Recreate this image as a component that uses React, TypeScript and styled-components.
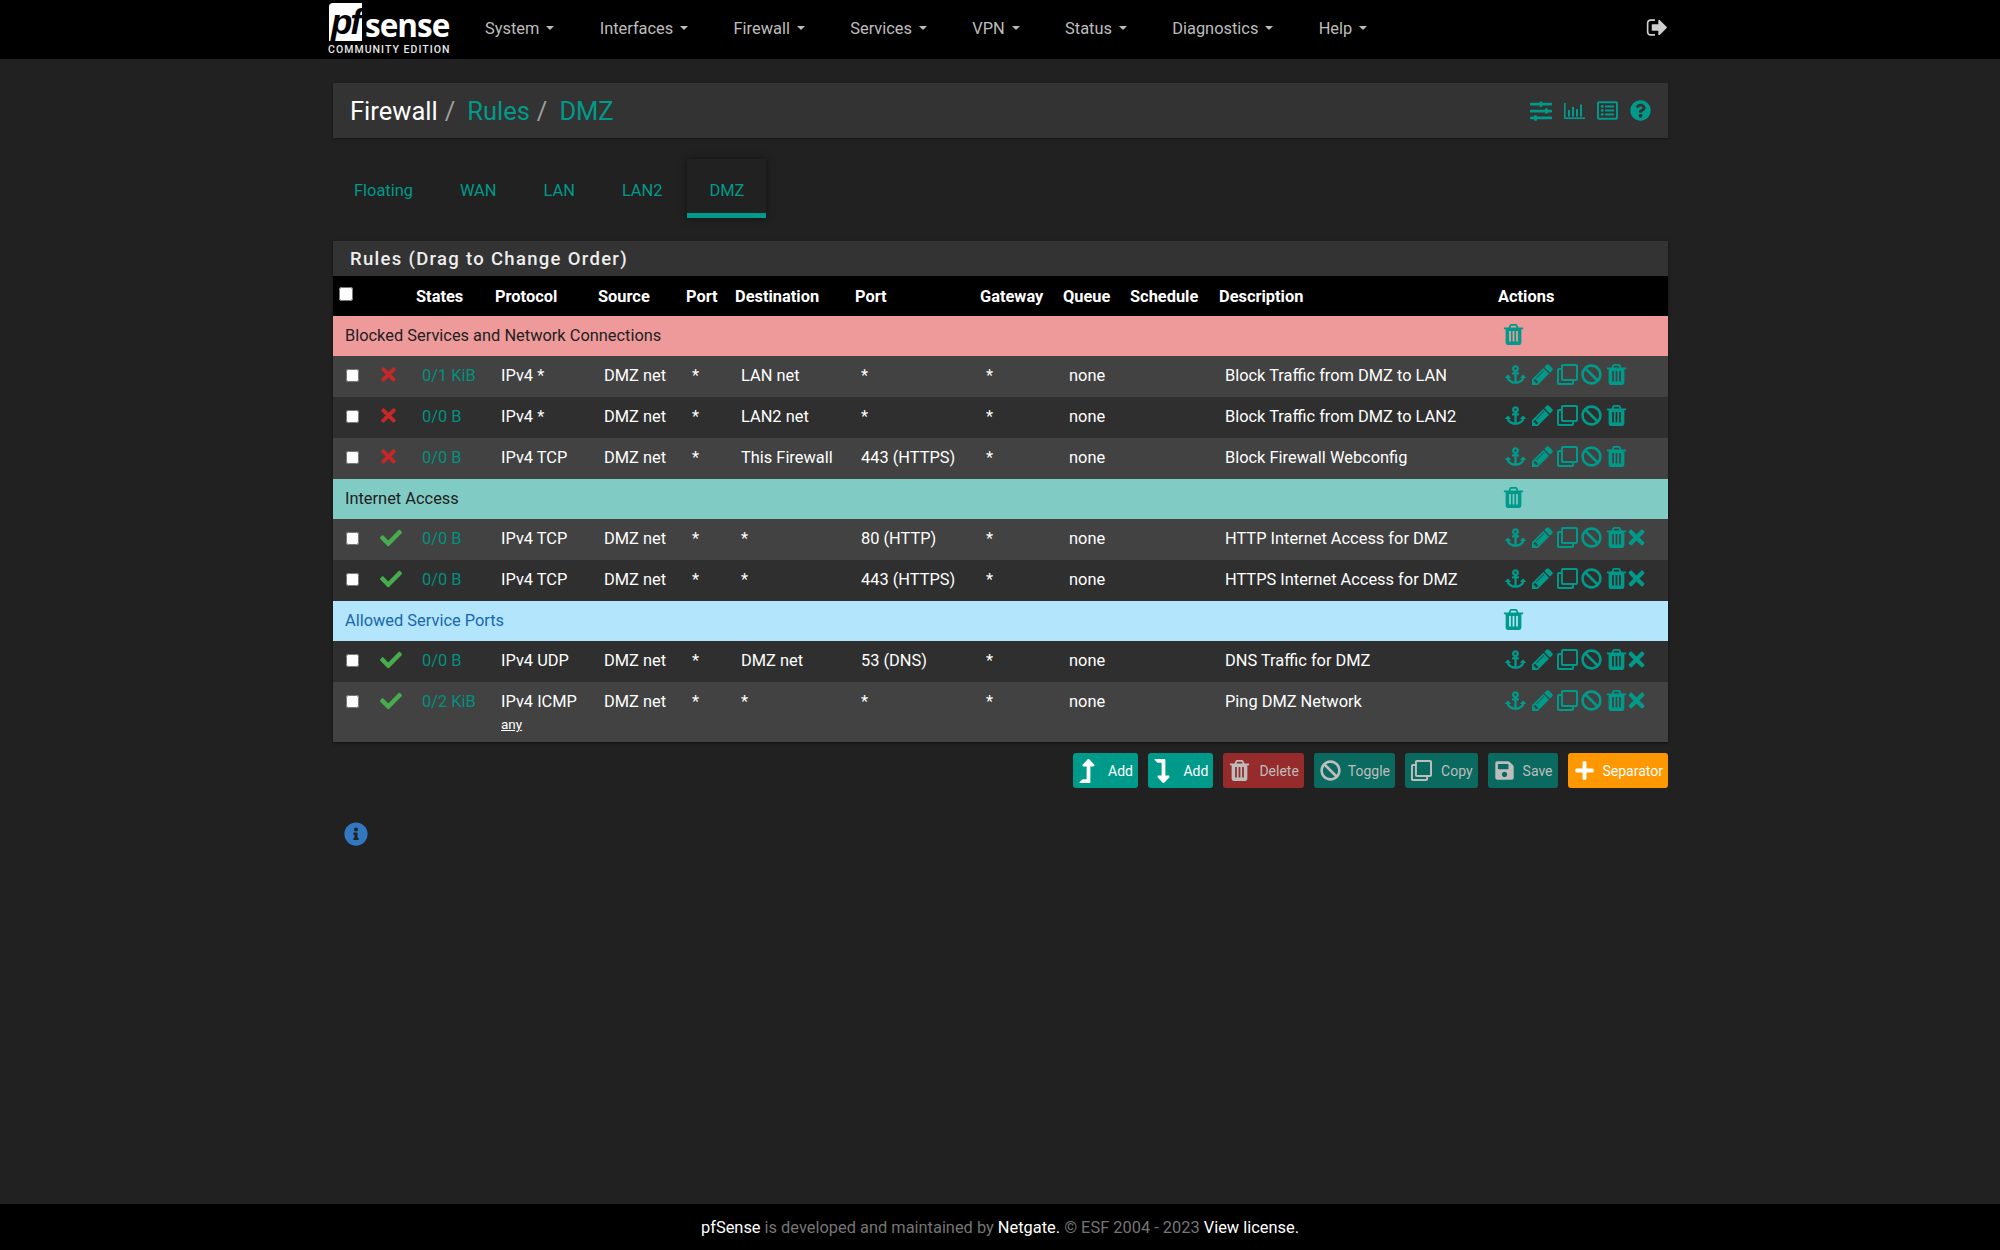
import React from "react";
import styled, { createGlobalStyle } from "styled-components";
import {
  FaAnchor,
  FaBan,
  FaCheck,
  FaInfoCircle,
  FaLevelDownAlt,
  FaLevelUpAlt,
  FaPlus,
  FaQuestionCircle,
  FaRegClone,
  FaRegListAlt,
  FaSave,
  FaSlidersH,
  FaTimes,
} from "react-icons/fa";

const TEAL = "#009a8a";

const GlobalStyle = createGlobalStyle`
  html, body {
    margin: 0;
    background: #212121;
    font-family: Roboto, "Liberation Sans", sans-serif;
    color: #fff;
  }
`;

const FaGlyph = ({ d, view = "0 0 1792 1792" }: { d: string; view?: string }) => (
  <svg viewBox={view} width="1em" height="1em" fill="currentColor">
    <path d={d} />
  </svg>
);

const TrashIcon = () => (
  <FaGlyph
    view="192 128 1408 1536"
    d="M704 1376v-704q0-14-9-23t-23-9h-64q-14 0-23 9t-9 23v704q0 14 9 23t23 9h64q14 0 23-9t9-23zm256 0v-704q0-14-9-23t-23-9h-64q-14 0-23 9t-9 23v704q0 14 9 23t23 9h64q14 0 23-9t9-23zm256 0v-704q0-14-9-23t-23-9h-64q-14 0-23 9t-9 23v704q0 14 9 23t23 9h64q14 0 23-9t9-23zm-544-992h448l-48-117q-7-9-17-11h-317q-10 2-17 11zm928 32v64q0 14-9 23t-23 9h-96v948q0 83-47 143.5t-113 60.5h-832q-66 0-113-58.5t-47-141.5v-952h-96q-14 0-23-9t-9-23v-64q0-14 9-23t23-9h309l70-167q15-37 54-63t79-26h320q40 0 79 26t54 63l70 167h309q14 0 23 9t9 23z"
  />
);

const PencilIcon = () => (
  <FaGlyph
    view="128 128 1536 1536"
    d="M491 1536l91-91-235-235-91 91v107h128v128h107zm523-928q0-22-22-22-10 0-17 7l-542 542q-7 7-7 17 0 22 22 22 10 0 17-7l542-542q7-7 7-17zm-54-192l416 416-832 832h-416v-416zm683 96q0 53-37 90l-166 166-416-416 166-165q36-38 90-38 53 0 91 38l235 234q37 39 37 91z"
  />
);

const SignOutIcon = () => (
  <FaGlyph d="M704 1440q0 4 1 20t.5 26.5-3 23.5-10 19.5-20.5 6.5h-320q-119 0-203.5-84.5t-84.5-203.5v-704q0-119 84.5-203.5t203.5-84.5h320q13 0 22.5 9.5t9.5 22.5q0 4 1 20t.5 26.5-3 23.5-10 19.5-20.5 6.5h-320q-66 0-113 47t-47 113v704q0 66 47 113t113 47h312l11.5 1 11.5 3 8 5.5 7 9 2 13.5zm928-544q0 26-19 45l-544 544q-19 19-45 19t-45-19-19-45v-288h-448q-26 0-45-19t-19-45v-384q0-26 19-45t45-19h448v-288q0-26 19-45t45-19 45 19l544 544q19 19 19 45z" />
);

const BarChartIcon = () => (
  <svg viewBox="0 0 21 16" width="21px" height="16px" fill="currentColor">
    <rect x="0" y="0" width="1.6" height="16" />
    <rect x="0" y="14.4" width="21" height="1.6" />
    <rect x="4" y="7" width="2" height="6.5" />
    <rect x="8" y="4" width="2" height="9.5" />
    <rect x="12" y="6" width="2" height="7.5" />
    <rect x="16" y="1.5" width="2" height="12" />
  </svg>
);

const Page = styled.div`
  min-height: 1250px;
  display: flex;
  flex-direction: column;
`;

const NavBar = styled.header`
  height: 59px;
  background: #000;
  flex: none;
`;

const NavInner = styled.div`
  width: 1335px;
  margin-left: 333px;
  height: 100%;
  display: flex;
  align-items: center;
`;

const Logo = styled.div`
  width: 157px;
  margin-left: -5px;
  flex: none;
  display: flex;
  flex-direction: column;
  align-items: flex-start;
`;

const LogoMark = styled.div`
  display: flex;
  align-items: center;
  margin-left: 1px;
  height: 38px;
`;

const LogoBox = styled.span`
  width: 33px;
  height: 38px;
  background: #fff;
  color: #000;
  border-radius: 4px 0 0 0;
  display: flex;
  align-items: center;
  justify-content: center;
  font: italic 700 35px/36px "Liberation Sans", sans-serif;
  letter-spacing: -2px;
  box-sizing: border-box;
`;

const LogoWord = styled.span`
  font: 700 31.5px/38px "Open Sans", sans-serif;
  letter-spacing: -1px;
  margin-left: 3px;
  padding-top: 5px;
  color: #fff;
`;

const LogoEdition = styled.span`
  font: 500 10.5px/12px Roboto, sans-serif;
  letter-spacing: 1.05px;
  color: #e6e6e6;
  margin-top: 3px;
  white-space: nowrap;
`;

const NavList = styled.nav`
  display: flex;
  gap: 45.3px;
  flex: 1;
  padding-bottom: 3px;
`;

const NavItem = styled.span`
  font-size: 16.4px;
  color: #bdbdbd;
  display: inline-flex;
  align-items: center;
  gap: 7px;
  white-space: nowrap;
`;

const Caret = styled.span`
  width: 0;
  height: 0;
  border-left: 4.5px solid transparent;
  border-right: 4.5px solid transparent;
  border-top: 4.5px solid #bdbdbd;
`;

const Logout = styled.span`
  font-size: 23px;
  color: #cfcfcf;
  display: flex;
  margin: 0 -1px 4px 0;
`;

const Main = styled.main`
  width: 1335px;
  margin-left: 333px;
  flex: 1;
`;

const BreadcrumbBar = styled.div`
  margin-top: 24px;
  height: 55px;
  background: #333;
  box-shadow: 0 1px 3px rgba(0, 0, 0, 0.35);
  display: flex;
  align-items: center;
  padding: 0 17px;
  box-sizing: border-box;
`;

const Crumbs = styled.h1`
  flex: 1;
  margin: 0;
  font-size: 25.5px;
  font-weight: 400;
  display: flex;
`;

const Crumb = styled.span<{ $link?: boolean }>`
  color: ${(p) => (p.$link ? TEAL : "#fff")};
`;

const CrumbSlash = styled.span`
  color: #9e9e9e;
  margin: 0 12px 0 7px;
`;

const BarIcons = styled.div`
  display: flex;
  align-items: center;
  gap: 12px;
  color: ${TEAL};
  font-size: 21px;
`;

const BarIcon = styled.span<{ $size?: number }>`
  display: flex;
  font-size: ${(p) => p.$size ?? 21}px;
`;

const Tabs = styled.div`
  display: flex;
  margin: 21px 0 0 -1px;
  gap: 3px;
`;

const Tab = styled.span<{ $active?: boolean }>`
  height: 59px;
  box-sizing: border-box;
  padding: 8px 22px 0;
  display: flex;
  align-items: center;
  font-size: 16.4px;
  color: ${TEAL};
  border-bottom: 5px solid ${(p) => (p.$active ? TEAL : "transparent")};
  box-shadow: ${(p) => (p.$active ? "0 0 8px rgba(0,0,0,0.45)" : "none")};
`;

const Panel = styled.section`
  margin-top: 23px;
  background: #333;
  box-shadow: 0 1px 3px rgba(0, 0, 0, 0.5);
`;

const PanelTitle = styled.h2`
  margin: 0;
  height: 35px;
  line-height: 36px;
  padding-left: 17px;
  font-size: 18.5px;
  font-weight: 500;
  letter-spacing: 1.3px;
  color: #eee;
`;

const RulesTable = styled.table`
  width: 100%;
  table-layout: fixed;
  border-collapse: collapse;
  font-size: 16.4px;
`;

const HeadRow = styled.tr`
  background: #000;
  height: 40px;
`;

const Th = styled.th`
  text-align: left;
  font-weight: 700;
  font-size: 16.4px;
  color: #fff;
  padding: 1px 0 0 2px;
  white-space: nowrap;
`;

const SelectTh = styled(Th)`
  padding: 0 0 4px 6px;
`;

const Row = styled.tr<{ $odd: boolean; $tall?: boolean }>`
  background: ${(p) => (p.$odd ? "#424242" : "#2f2f2f")};
  height: ${(p) => (p.$tall ? "60px" : "41px")};
`;

const Td = styled.td`
  padding: 10px 0 0 8px;
  vertical-align: top;
  color: #fff;
  white-space: nowrap;
  line-height: 20px;
`;

const StatesLink = styled.span`
  color: #00917f;
`;

const SubLink = styled.div`
  font-size: 13.5px;
  line-height: 16px;
  margin-top: 4px;
  text-decoration: underline;
`;

const StatusIcon = styled.span<{ $pass: boolean }>`
  display: block;
  margin: -2px 0 0 ${(p) => (p.$pass ? "0" : "-2px")};
  font-size: ${(p) => (p.$pass ? "22px" : "21px")};
  line-height: 20px;
  color: ${(p) => (p.$pass ? "#46ac4e" : "#c62828")};
  svg {
    display: block;
  }
`;

const Check = styled.input.attrs({ type: "checkbox" })`
  margin: 0;
  width: 14px;
  height: 14px;
  display: block;
`;

const RowCheck = styled(Check)`
  width: 13px;
  height: 13px;
  margin: 3px 0 0 5px;
`;

const Actions = styled.div`
  display: flex;
  align-items: center;
  height: 20px;
  gap: 4px;
  color: ${TEAL};
  margin: -2px 0 0 1px;
  svg {
    display: block;
    flex: none;
    width: auto;
    height: 21px;
  }
`;

const PencilSlot = styled.span`
  display: flex;
  margin-left: 2.4px;
`;

const BanSlot = styled.span`
  display: flex;
  margin-left: -1px;
`;

const CloseIcon = styled(FaTimes)`
  && {
    height: 23px;
    margin-left: -6px;
  }
`;

const SeparatorRow = styled.tr<{ $tone: string }>`
  height: 40px;
  background: ${(p) => p.$tone};
`;

const SeparatorCell = styled.td<{ $text: string }>`
  color: ${(p) => p.$text};
  padding: 0 0 2px 12px;
  white-space: nowrap;
`;

const SeparatorTrash = styled.td`
  color: ${TEAL};
  padding: 0 0 4px 7px;
  svg {
    display: block;
    width: auto;
    height: 21px;
  }
`;

const ButtonBar = styled.div`
  display: flex;
  justify-content: flex-end;
  gap: 10px;
  margin-top: 11px;
`;

const Btn = styled.button<{ $bg: string; $dim?: boolean; $gap?: number }>`
  height: 35px;
  border: 0;
  border-radius: 3px;
  padding: 0 5px 0 6px;
  display: flex;
  align-items: center;
  justify-content: space-between;
  gap: ${(p) => p.$gap ?? 9}px;
  background: ${(p) => p.$bg};
  color: ${(p) => (p.$dim ? "#bdbdbd" : "#fff")};
  font: 400 14px Roboto, sans-serif;
  svg {
    width: auto;
    height: 21px;
    display: block;
  }
`;

const AddBtn = styled(Btn)`
  padding-left: 7px;
  svg {
    height: 24px;
    margin: 0 -4.5px;
  }
`;

const InfoIcon = styled.div`
  margin: 34px 0 0 11px;
  font-size: 24px;
  color: #3278c1;
  display: flex;
`;

const Footer = styled.footer`
  height: 46px;
  flex: none;
  background: #000;
  display: flex;
  align-items: center;
  justify-content: center;
  font-size: 16.4px;
  color: #757575;
  white-space: pre;
`;

const FooterLink = styled.span`
  color: #fff;
`;

const colWidths = [39, 42, 79, 103, 88, 49, 120, 125, 83, 67, 89, 279, 172];

const navItems = ["System", "Interfaces", "Firewall", "Services", "VPN", "Status", "Diagnostics", "Help"];
const tabs = ["Floating", "WAN", "LAN", "LAN2", "DMZ"];

type Rule = {
  pass: boolean;
  states: string;
  proto: string;
  sub?: string;
  dest: string;
  port: string;
  desc: string;
};

type Group = { title: string; tone: string; text: string; rules: Rule[] };

const groups: Group[] = [
  {
    title: "Blocked Services and Network Connections",
    tone: "#ef9a9a",
    text: "#212121",
    rules: [
      { pass: false, states: "0/1 KiB", proto: "IPv4 *", dest: "LAN net", port: "*", desc: "Block Traffic from DMZ to LAN" },
      { pass: false, states: "0/0 B", proto: "IPv4 *", dest: "LAN2 net", port: "*", desc: "Block Traffic from DMZ to LAN2" },
      { pass: false, states: "0/0 B", proto: "IPv4 TCP", dest: "This Firewall", port: "443 (HTTPS)", desc: "Block Firewall Webconfig" },
    ],
  },
  {
    title: "Internet Access",
    tone: "#80cbc4",
    text: "#212121",
    rules: [
      { pass: true, states: "0/0 B", proto: "IPv4 TCP", dest: "*", port: "80 (HTTP)", desc: "HTTP Internet Access for DMZ" },
      { pass: true, states: "0/0 B", proto: "IPv4 TCP", dest: "*", port: "443 (HTTPS)", desc: "HTTPS Internet Access for DMZ" },
    ],
  },
  {
    title: "Allowed Service Ports",
    tone: "#b3e5fc",
    text: "#1867b0",
    rules: [
      { pass: true, states: "0/0 B", proto: "IPv4 UDP", dest: "DMZ net", port: "53 (DNS)", desc: "DNS Traffic for DMZ" },
      { pass: true, states: "0/2 KiB", proto: "IPv4 ICMP", sub: "any", dest: "*", port: "*", desc: "Ping DMZ Network" },
    ],
  },
];

const RuleRow = ({ rule, odd }: { rule: Rule; odd: boolean }) => (
  <Row $odd={odd} $tall={!!rule.sub}>
    <Td>
      <RowCheck />
    </Td>
    <Td>
      <StatusIcon $pass={rule.pass}>{rule.pass ? <FaCheck /> : <FaTimes />}</StatusIcon>
    </Td>
    <Td>
      <StatesLink>{rule.states}</StatesLink>
    </Td>
    <Td>
      {rule.proto}
      {rule.sub && <SubLink>{rule.sub}</SubLink>}
    </Td>
    <Td>DMZ net</Td>
    <Td>*</Td>
    <Td>{rule.dest}</Td>
    <Td>{rule.port}</Td>
    <Td>*</Td>
    <Td>none</Td>
    <Td />
    <Td>{rule.desc}</Td>
    <Td>
      <Actions>
        <FaAnchor />
        <PencilSlot>
          <PencilIcon />
        </PencilSlot>
        <FaRegClone />
        <BanSlot>
          <FaBan />
        </BanSlot>
        <TrashIcon />
        {rule.pass && <CloseIcon />}
      </Actions>
    </Td>
  </Row>
);

export default function App() {
  return (
    <Page>
      <GlobalStyle />
      <NavBar>
        <NavInner>
          <Logo>
            <LogoMark>
              <LogoBox>pf</LogoBox>
              <LogoWord>sense</LogoWord>
            </LogoMark>
            <LogoEdition>COMMUNITY EDITION</LogoEdition>
          </Logo>
          <NavList>
            {navItems.map((item) => (
              <NavItem key={item}>
                {item}
                <Caret />
              </NavItem>
            ))}
          </NavList>
          <Logout>
            <SignOutIcon />
          </Logout>
        </NavInner>
      </NavBar>

      <Main>
        <BreadcrumbBar>
          <Crumbs>
            <Crumb>Firewall</Crumb>
            <CrumbSlash>/</CrumbSlash>
            <Crumb $link>Rules</Crumb>
            <CrumbSlash>/</CrumbSlash>
            <Crumb $link>DMZ</Crumb>
          </Crumbs>
          <BarIcons>
            <BarIcon $size={22}>
              <FaSlidersH />
            </BarIcon>
            <BarIcon>
              <BarChartIcon />
            </BarIcon>
            <BarIcon>
              <FaRegListAlt />
            </BarIcon>
            <BarIcon>
              <FaQuestionCircle />
            </BarIcon>
          </BarIcons>
        </BreadcrumbBar>

        <Tabs>
          {tabs.map((t) => (
            <Tab key={t} $active={t === "DMZ"}>
              {t}
            </Tab>
          ))}
        </Tabs>

        <Panel>
          <PanelTitle>Rules (Drag to Change Order)</PanelTitle>
          <RulesTable>
            <colgroup>
              {colWidths.map((w, i) => (
                <col key={i} style={{ width: w }} />
              ))}
            </colgroup>
            <thead>
              <HeadRow>
                <SelectTh>
                  <Check />
                </SelectTh>
                <Th />
                <Th>States</Th>
                <Th>Protocol</Th>
                <Th>Source</Th>
                <Th>Port</Th>
                <Th>Destination</Th>
                <Th>Port</Th>
                <Th>Gateway</Th>
                <Th>Queue</Th>
                <Th>Schedule</Th>
                <Th>Description</Th>
                <Th>Actions</Th>
              </HeadRow>
            </thead>
            <tbody>
              {groups.map((group, g) => (
                <React.Fragment key={group.title}>
                  <SeparatorRow $tone={group.tone}>
                    <SeparatorCell colSpan={12} $text={group.text}>
                      {group.title}
                    </SeparatorCell>
                    <SeparatorTrash>
                      <TrashIcon />
                    </SeparatorTrash>
                  </SeparatorRow>
                  {group.rules.map((rule, i) => (
                    <RuleRow key={rule.desc} rule={rule} odd={g === 2 ? i === 1 : i % 2 === 0} />
                  ))}
                </React.Fragment>
              ))}
            </tbody>
          </RulesTable>
        </Panel>

        <ButtonBar>
          <AddBtn $bg={TEAL} $gap={13.5}>
            <FaLevelUpAlt />
            Add
          </AddBtn>
          <AddBtn $bg={TEAL} $gap={13.5}>
            <FaLevelDownAlt />
            Add
          </AddBtn>
          <Btn $bg="#962b2b" $dim>
            <TrashIcon />
            Delete
          </Btn>
          <Btn $bg="#0a6a5f" $dim $gap={7}>
            <FaBan />
            Toggle
          </Btn>
          <Btn $bg="#0a6a5f" $dim>
            <FaRegClone />
            Copy
          </Btn>
          <Btn $bg="#0a6a5f" $dim $gap={8}>
            <FaSave />
            Save
          </Btn>
          <Btn $bg="#ff9800" $gap={8}>
            <FaPlus />
            Separator
          </Btn>
        </ButtonBar>

        <InfoIcon>
          <FaInfoCircle />
        </InfoIcon>
      </Main>

      <Footer>
        <FooterLink>pfSense</FooterLink> is developed and maintained by <FooterLink>Netgate.</FooterLink> © ESF 2004 - 2023 <FooterLink>View license.</FooterLink>
      </Footer>
    </Page>
  );
}
